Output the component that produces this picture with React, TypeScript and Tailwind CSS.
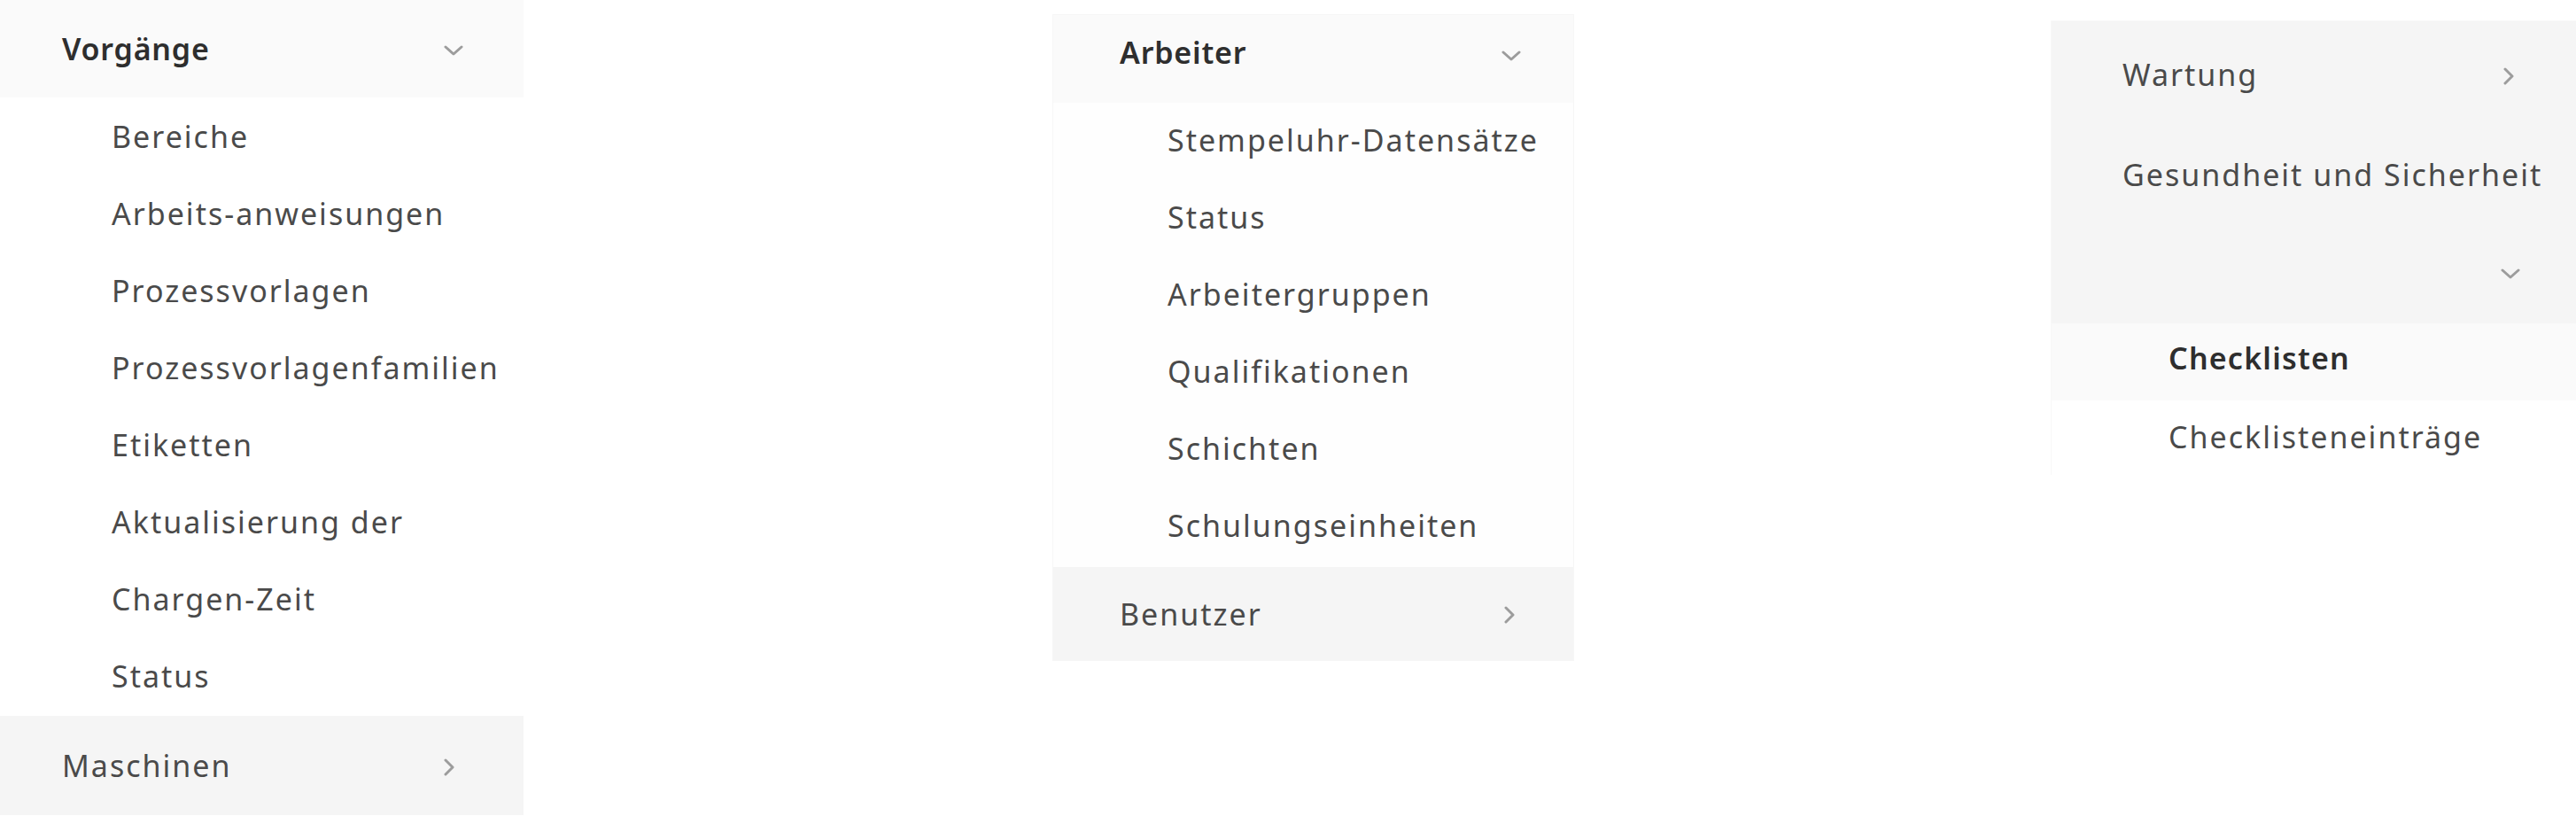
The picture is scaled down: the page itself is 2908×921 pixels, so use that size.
import React from 'react'

const font = { fontFamily: '"Noto Sans", "Open Sans", sans-serif' }

function ChevronDown() {
  return (
    <svg width="22" height="12" viewBox="0 0 22 12" fill="none">
      <polyline points="2,2 11,10 20,2" stroke="#9c9c9c" strokeWidth="3" strokeLinecap="round" strokeLinejoin="round" />
    </svg>
  )
}

function ChevronRight() {
  return (
    <svg width="14" height="20" viewBox="0 0 14 20" fill="none">
      <polyline points="3,2 11,10 3,18" stroke="#9c9c9c" strokeWidth="3" strokeLinecap="round" strokeLinejoin="round" />
    </svg>
  )
}

function SubItem({ label, pad, bold }: { label: string; pad: string; bold?: boolean }) {
  return (
    <div className={`h-[87px] flex items-center ${pad}`}>
      <span
        className={
          bold
            ? 'text-[34px] leading-none font-semibold tracking-[1.2px] text-[#2e2e2e]'
            : 'text-[34px] leading-none tracking-[2px] text-[#4a4a4a]'
        }
      >
        {label}
      </span>
    </div>
  )
}

const vorgaenge = [
  'Bereiche',
  'Arbeits-anweisungen',
  'Prozessvorlagen',
  'Prozessvorlagenfamilien',
  'Etiketten',
  'Aktualisierung der',
  'Chargen-Zeit',
  'Status',
]

const arbeiter = [
  'Stempeluhr-Datensätze',
  'Status',
  'Arbeitergruppen',
  'Qualifikationen',
  'Schichten',
  'Schulungseinheiten',
]

export default function App() {
  return (
    <div className="w-[2908px] h-[921px] bg-white overflow-hidden flex items-start" style={font}>
      {/* Panel 1: Vorgänge */}
      <div className="w-[591px] shrink-0 flex flex-col">
        <div className="h-[110px] bg-[#fafafa] flex items-center justify-between pl-[70px] pr-[68px]">
          <span className="text-[34px] leading-none font-semibold tracking-[0.8px] text-[#2e2e2e]">Vorgänge</span>
          <span className="mt-[3px]">
            <ChevronDown />
          </span>
        </div>
        {vorgaenge.map((l) => (
          <SubItem key={l} label={l} pad="pl-[126px]" />
        ))}
        <div className="mt-[2px] h-[112px] bg-[#f5f5f5] flex items-center justify-between pl-[70px] pr-[77px]">
          <span className="text-[34px] leading-none tracking-[2px] text-[#4a4a4a]">Maschinen</span>
          <span className="mt-[3px]">
            <ChevronRight />
          </span>
        </div>
      </div>

      {/* Panel 2: Arbeiter */}
      <div className="ml-[597px] mt-[16px] w-[589px] shrink-0 flex flex-col border border-[#f6f6f6] bg-[#fefefe]">
        <div className="h-[99px] bg-[#fafafa] flex items-start justify-between pt-[25px] pl-[75px] pr-[59px]">
          <span className="text-[34px] leading-none font-semibold tracking-[0.8px] text-[#2e2e2e]">Arbeiter</span>
          <span className="mt-[15px]">
            <ChevronDown />
          </span>
        </div>
        <div className="flex flex-col -mt-[2px]">
          {arbeiter.map((l) => (
            <SubItem key={l} label={l} pad="pl-[129px]" />
          ))}
        </div>
        <div className="mt-[4px] h-[105px] bg-[#f5f5f5] flex items-center justify-between pl-[75px] pr-[65px]">
          <span className="text-[34px] leading-none tracking-[2px] text-[#4a4a4a]">Benutzer</span>
          <span className="mt-[3px]">
            <ChevronRight />
          </span>
        </div>
      </div>

      {/* Panel 3: Wartung / Gesundheit und Sicherheit */}
      <div className="ml-[538px] mt-[23px] flex-1 flex flex-col border-l border-t border-[#f8f8f8]">
        <div className="bg-[#f5f5f5] flex flex-col">
          <div className="h-[123px] flex items-center justify-between pl-[80px] pr-[69px] pb-[3px]">
            <span className="text-[34px] leading-none tracking-[2px] text-[#4a4a4a]">Wartung</span>
            <span className="mt-[4px]">
              <ChevronRight />
            </span>
          </div>
          <div className="h-[103px] flex items-center pl-[80px] pb-[3px]">
            <span className="text-[34px] leading-none tracking-[2px] text-[#4a4a4a]">Gesundheit und Sicherheit</span>
          </div>
          <div className="h-[115px] flex items-center justify-end pr-[63px]">
            <span className="mt-[3px]">
              <ChevronDown />
            </span>
          </div>
        </div>
        <div className="bg-[#fafafa] pb-[0px]">
          <div className="-mt-[5px] mb-[5px]">
            <SubItem label="Checklisten" pad="pl-[132px]" bold />
          </div>
        </div>
        <div className="-mt-[3px]">
          <SubItem label="Checklisteneinträge" pad="pl-[132px]" />
        </div>
      </div>
    </div>
  )
}
